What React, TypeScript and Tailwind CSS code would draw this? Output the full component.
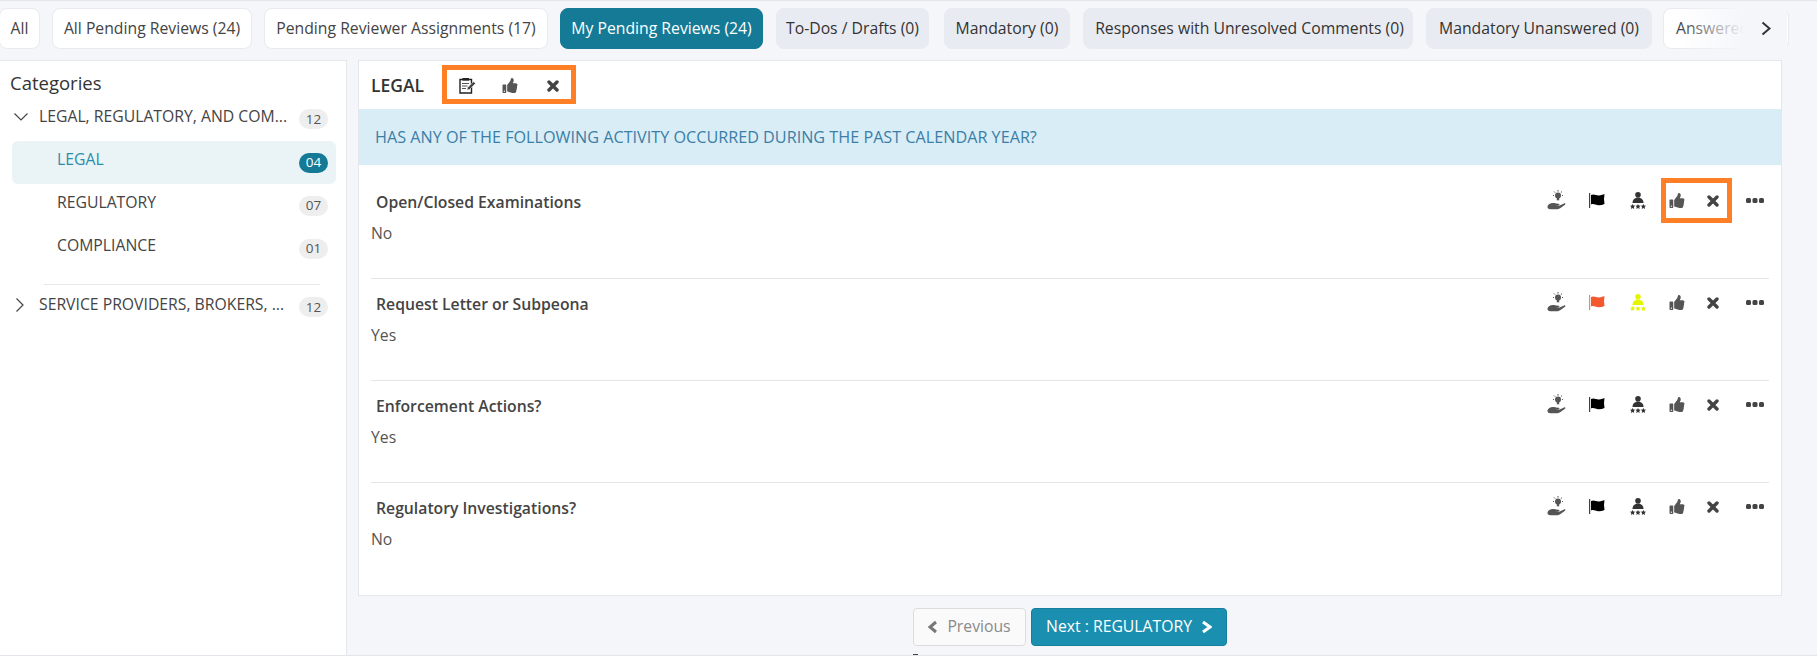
import React from "react";
import { FaThumbsUp } from "react-icons/fa";

const tabs = [
  { label: "All", kind: "white", w: "w-[41px] justify-center" },
  { label: "All Pending Reviews (24)", kind: "white", w: "ml-[12px] w-[200px] justify-center" },
  { label: "Pending Reviewer Assignments (17)", kind: "white", w: "ml-[12px] w-[284px] justify-center" },
  { label: "My Pending Reviews (24)", kind: "active", w: "ml-[12px] w-[203px] justify-center" },
  { label: "To-Dos / Drafts (0)", kind: "gray", w: "ml-[13px] w-[153px] justify-center" },
  { label: "Mandatory (0)", kind: "gray", w: "ml-[15px] w-[126px] justify-center" },
  { label: "Responses with Unresolved Comments (0)", kind: "gray", w: "ml-[13px] w-[330px] justify-center pl-[3px]" },
  { label: "Mandatory Unanswered (0)", kind: "gray", w: "ml-[13px] w-[226px] justify-center" },
  { label: "Answered (0)", kind: "white", w: "ml-[11px] w-[126px] pl-[12px]" },
];

const tabStyles: Record<string, string> = {
  white: "bg-white border border-[#e8eaef] text-[#444]",
  gray: "bg-[#e9ebf2] border border-[#e9ebf2] text-[#333]",
  active: "bg-[#147a96] border border-[#147a96] text-white",
};

function HandIcon() {
  return (
    <svg width="20" height="21" viewBox="0 0 20 21" className="text-[#555]" fill="currentColor">
      <circle cx="11" cy="5.500" r="3" />
      <rect x="9.800" y="7.500" width="2.400" height="2.800" />
      <path d="M11 0v1.600M7 1.500l1.100 1.100M15 1.500l-1.100 1.100M6 5.500h1M15 5.500h1" stroke="currentColor" strokeWidth="1" />
      <path d="M0.500 16.500c.5-2.500 3.500-4 6.500-3.500 1.500.3 3 .8 4.500.8 1.300 0 1.300 1.700-.3 1.900H8.500l3 .2 5.500-2.500c1.300-.4 2 .6 1 1.300l-4.500 3.300c-1.500 1-3.500 1.500-5.300 1.200H4c-2 .2-4-.5-3.500-3.200z" />
    </svg>
  );
}

function FlagIcon({ color }: { color: string }) {
  return (
    <svg width="17" height="15" viewBox="0 0 17 15" fill={color}>
      <rect x="0" y="0" width="1.200" height="15" opacity="0.750" />
      <path d="M2 2c3-1.600 5 .6 8 .4 2.400-.1 4-.9 5.500-1.400l-.5 5 .5 5c-2 .8-4 1.400-6 1.300-3-.2-5-2-7.500-.8z" />
    </svg>
  );
}

function PersonIcon({ color }: { color: string }) {
  const star = "M2.600 0l.8 1.500 1.800.3-1.300 1.300.3 1.900-1.600-.9-1.600.9.3-1.900L0 1.800l1.800-.3z";
  return (
    <svg width="16" height="17" viewBox="0 0 16 17" fill={color}>
      <circle cx="8" cy="2.800" r="2.800" />
      <path d="M2.500 11c0-3.200 2.300-5.500 5.500-5.500s5.500 2.300 5.500 5.500z" />
      <path d={star} transform="translate(0 12)" />
      <path d={star} transform="translate(5.400 12)" />
      <path d={star} transform="translate(10.800 12)" />
    </svg>
  );
}

function NotesIcon() {
  return (
    <svg width="17" height="17" viewBox="0 0 17 17">
      <path d="M1 2.500h11.500v13.500H1z" fill="#fff" stroke="#222" strokeWidth="1.400" />
      <rect x="3.500" y="1" width="6.500" height="2.600" fill="#222" />
      <path d="M3 6.500h7M3 9h5.500M3 11.500h4" stroke="#555" strokeWidth="1.100" />
      <path d="M8 13l.6-2.400 6-6 1.900 1.900-6 6z" fill="#444" stroke="#fff" strokeWidth="0.500" />
    </svg>
  );
}

function DotsIcon() {
  return (
    <svg width="18" height="5" viewBox="0 0 18 5" fill="#444">
      <rect x="0" y="0" width="5" height="5" rx="1.500" />
      <rect x="6.500" y="0" width="5" height="5" rx="1.500" />
      <rect x="13" y="0" width="5" height="5" rx="1.500" />
    </svg>
  );
}

function XIcon() {
  return (
    <svg width="12" height="12" viewBox="0 0 12 12" fill="none" stroke="#444" strokeWidth="3.400" strokeLinecap="round">
      <path d="M2 2l8 8M10 2l-8 8" />
    </svg>
  );
}

function Chevron({ dir, color, width, height, stroke }: { dir: "left" | "right"; color: string; width: number; height: number; stroke: number }) {
  const m = stroke / 2 + 0.5;
  const d =
    dir === "right"
      ? `M${m} ${m}L${width - m} ${height / 2}L${m} ${height - m}`
      : `M${width - m} ${m}L${m} ${height / 2}L${width - m} ${height - m}`;
  return (
    <svg width={width} height={height} viewBox={`0 0 ${width} ${height}`} fill="none" stroke={color} strokeWidth={stroke} className="shrink-0">
      <path d={d} />
    </svg>
  );
}

function ThumbX({ boxed }: { boxed: boolean }) {
  return (
    <div className={`flex h-[45px] w-[71px] items-center border-[5px] ${boxed ? "border-[#ff7f27]" : "border-transparent"}`}>
      <FaThumbsUp className="ml-[3px] h-[15px] w-[16px] text-[#555]" />
      <span className="ml-[22px]"><XIcon /></span>
    </div>
  );
}

const questions = [
  { title: "Open/Closed Examinations", answer: "No", boxed: true, flag: "#000000", person: "#333333" },
  { title: "Request Letter or Subpeona", answer: "Yes", boxed: false, flag: "#f4582f", person: "#e4f500" },
  { title: "Enforcement Actions?", answer: "Yes", boxed: false, flag: "#000000", person: "#333333" },
  { title: "Regulatory Investigations?", answer: "No", boxed: false, flag: "#000000", person: "#333333" },
];

function Badge({ n, active }: { n: string; active?: boolean }) {
  return (
    <span
      className={`flex h-[20px] w-[29px] shrink-0 items-center justify-center rounded-full text-[13.500px] ${
        active ? "bg-[#147a96] text-white" : "bg-[#eeeeee] text-[#555]"
      }`}
    >
      {n}
    </span>
  );
}

function SubItem({ label, n, active }: { label: string; n: string; active?: boolean }) {
  return (
    <div
      className={`ml-[12px] flex h-[43px] w-[324px] items-center justify-between rounded-[6px] pl-[45px] pr-[8px] ${
        active ? "bg-[#eaf4f7] text-[#2b8ea8]" : "text-[#444]"
      }`}
    >
      <span className="-translate-y-[3px]">{label}</span>
      <Badge n={n} active={active} />
    </div>
  );
}

export default function App() {
  return (
    <div
      className="relative flex h-[656px] w-[1817px] flex-col overflow-hidden border-y border-[#e3e5ea] bg-[#f5f6fa] text-[15.750px] text-[#444]"
      style={{ fontFamily: '"Open Sans", "Liberation Sans", sans-serif' }}
    >
      <div className="relative flex h-[59px] shrink-0 overflow-hidden pt-[7px]">
        <div className="-ml-px flex">
          {tabs.map((t) => (
            <div
              key={t.label}
              className={`flex h-[41px] shrink-0 items-center whitespace-nowrap rounded-[8px] ${t.w} ${tabStyles[t.kind]}`}
            >
              {t.label}
            </div>
          ))}
        </div>
        <div className="absolute left-[1680px] top-[7px] flex h-[41px] w-[107px] items-center justify-end bg-gradient-to-r from-transparent to-[#f5f6fa] to-60% pr-[16px]">
          <Chevron dir="right" color="#333" width={10} height={15} stroke={2} />
        </div>
      </div>

      <div className="flex min-h-0 flex-1">
        <aside className="w-[347px] shrink-0 border-r border-t border-[#e5e7ec] bg-white">
          <div className="pl-[10px] pt-[10px] text-[18.500px] font-medium leading-[24px] text-[#333]">Categories</div>
          <div className="mt-[11px] flex h-[26px] items-center pl-[14px] pr-[18px]">
            <span className="-translate-y-[2px]">
              <svg width="14" height="8" viewBox="0 0 14 8" fill="none" stroke="#444" strokeWidth="1.200">
                <path d="M0.500 0.500L7 7l6.500-6.500" />
              </svg>
            </span>
            <span className="ml-[11px] flex-1 -translate-y-[2px] whitespace-nowrap">LEGAL, REGULATORY, AND COM...</span>
            <Badge n="12" />
          </div>
          <div className="mt-[9px]">
            <SubItem label="LEGAL" n="04" active />
            <SubItem label="REGULATORY" n="07" />
            <SubItem label="COMPLIANCE" n="01" />
          </div>
          <div className="ml-[44px] mt-[14px] h-px w-[276px] bg-[#e8e8e8]" />
          <div className="mt-[10px] flex h-[24px] items-center pl-[16px] pr-[18px]">
            <span className="-translate-y-[2px]">
              <svg width="8" height="14" viewBox="0 0 8 14" fill="none" stroke="#444" strokeWidth="1.200">
                <path d="M0.500 0.500L7 7l-6.500 6.500" />
              </svg>
            </span>
            <span className="ml-[15px] flex-1 -translate-y-[2px] whitespace-nowrap">SERVICE PROVIDERS, BROKERS, ...</span>
            <Badge n="12" />
          </div>
        </aside>

        <main className="flex min-w-0 flex-1 flex-col pl-[11px] pr-[35px]">
          <section className="h-[536px] border border-[#e5e7ec] bg-white">
            <header className="flex h-[48px] items-center pl-[12px]">
              <span className="w-[71px] text-[17.500px] font-semibold text-[#333]">LEGAL</span>
              <div className="-mt-[2px] flex h-[39px] w-[134px] items-center border-[5px] border-[#ff7f27] pt-[3px]">
                <span className="ml-[12px]"><NotesIcon /></span>
                <FaThumbsUp className="ml-[26px] h-[15px] w-[16px] text-[#555]" />
                <span className="ml-[29px]"><XIcon /></span>
              </div>
            </header>
            <div className="flex h-[56px] items-center bg-[#d9edf6] pl-[16px] text-[16.200px] text-[#3b7ea6]">
              HAS ANY OF THE FOLLOWING ACTIVITY OCCURRED DURING THE PAST CALENDAR YEAR?
            </div>
            <div className="mx-[12px] pt-[12px]">
              {questions.map((q, i) => (
                <div
                  key={q.title}
                  className={`flex h-[102px] justify-between ${i < questions.length - 1 ? "border-b border-[#e5e5e5]" : ""}`}
                >
                  <div>
                    <div className="pl-[5px] pt-[15px] font-semibold leading-[20px] text-[#444]">{q.title}</div>
                    <div className="pt-[11px] leading-[20px] text-[#555]">{q.answer}</div>
                  </div>
                  <div className="mt-px flex h-[45px] items-center pr-[5px]">
                    <div className="flex w-[40px] justify-center"><HandIcon /></div>
                    <div className="flex w-[41px] justify-center"><FlagIcon color={q.flag} /></div>
                    <div className="flex w-[40px] justify-center"><PersonIcon color={q.person} /></div>
                    <div className="ml-[3px]"><ThumbX boxed={q.boxed} /></div>
                    <div className="ml-[14px]"><DotsIcon /></div>
                  </div>
                </div>
              ))}
            </div>
          </section>
          <div className="mt-[12px] flex gap-[5px] pl-[555px]">
            <div className="flex h-[38px] w-[113px] items-center justify-center gap-[9px] rounded-[4px] border border-[#dcdcdc] bg-[#fafafa] text-[#8a8a8a]">
              <Chevron dir="left" color="#777" width={10} height={14} stroke={3} />
              Previous
            </div>
            <div className="flex h-[38px] w-[196px] items-center justify-center gap-[9px] rounded-[4px] border border-[#157f9d] bg-[#1a8fb0] font-medium text-white">
              Next : REGULATORY
              <Chevron dir="right" color="#fff" width={11} height={14} stroke={3} />
            </div>
          </div>
        </main>
      </div>
      <div className="absolute bottom-0 left-[913px] h-px w-[5px] bg-[#444]" />
    </div>
  );
}
